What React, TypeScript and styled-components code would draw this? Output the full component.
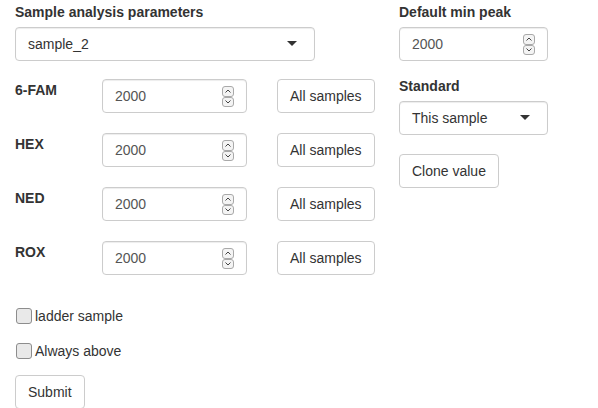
import React from "react";
import styled, { createGlobalStyle } from "styled-components";

const Global = createGlobalStyle`
  * { box-sizing: border-box; }
  body {
    margin: 0;
    font-family: "Liberation Sans", Arial, Helvetica, sans-serif;
    font-size: 14px;
    line-height: 20px;
    color: #333;
    background: #fff;
  }
`;

const Page = styled.div`
  display: flex;
  padding: 2px 15px 0 15px;
`;

const LeftCol = styled.div`
  width: 384px;
  flex: none;
`;

const RightCol = styled.div`
  flex: 1;
`;

const FormGroup = styled.div<{ $mb?: number }>`
  margin-bottom: ${(p) => (p.$mb ?? 15)}px;
`;

const Label = styled.label`
  display: block;
  font-weight: bold;
  margin-bottom: 5px;
  line-height: 20px;
`;

const SelectBox = styled.div<{ $w: number }>`
  position: relative;
  width: ${(p) => p.$w}px;
  height: 34px;
  padding: 6px 12px;
  border: 1px solid #ccc;
  border-radius: 4px;
  background: #fff;
  box-shadow: inset 0 1px 1px rgba(0, 0, 0, 0.075);
  line-height: 20px;
  &::after {
    content: "";
    position: absolute;
    right: 17px;
    top: 50%;
    margin-top: -3px;
    border-style: solid;
    border-width: 5px 5px 0 5px;
    border-color: #333 transparent transparent transparent;
  }
`;

const NumWrap = styled.div<{ $w: number }>`
  position: relative;
  width: ${(p) => p.$w}px;
  height: 34px;
`;

const NumInput = styled.input`
  display: block;
  width: 100%;
  height: 34px;
  padding: 6px 12px;
  border: 1px solid #ccc;
  border-radius: 4px;
  background: #fff;
  box-shadow: inset 0 1px 1px rgba(0, 0, 0, 0.075);
  font-family: inherit;
  font-size: 14px;
  color: #555;
  margin: 0;
  outline: none;
`;

const Spinner = styled.div`
  position: absolute;
  right: 13px;
  top: 7px;
  width: 12px;
  height: 21px;
  display: flex;
  flex-direction: column;
`;

const SpinBtn = styled.div`
  flex: 1;
  border: 1px solid #a9a9a9;
  border-radius: 3px;
  background: #f4f4f4;
  display: flex;
  align-items: center;
  justify-content: center;
`;

const Button = styled.button`
  display: inline-block;
  height: 34px;
  padding: 6px 12px;
  border: 1px solid #ccc;
  border-radius: 4px;
  background: #fff;
  font-family: inherit;
  font-size: 14px;
  line-height: 20px;
  color: #333;
  margin: 0;
`;

const ChannelRow = styled.div`
  display: grid;
  grid-template-columns: 87px 145px auto;
  align-items: start;
  margin-bottom: 20px;
`;

const RowLabel = styled.div`
  font-weight: bold;
  padding-top: 1px;
`;

const RowButton = styled(Button)`
  justify-self: start;
  margin-left: 30px;
`;

const Rows = styled.div`
  margin-top: 18px;
`;

const CheckRow = styled.label<{ $mb: number }>`
  display: flex;
  align-items: center;
  height: 20px;
  margin-bottom: ${(p) => p.$mb}px;
`;

const Check = styled.input`
  appearance: none;
  width: 16px;
  height: 16px;
  margin: 0 3px 0 1px;
  border: 1px solid #8d8d8d;
  border-radius: 3px;
  background: #e9e9e9;
  flex: none;
`;

const Checks = styled.div`
  margin-top: 31px;
`;

const CloneWrap = styled.div`
  margin-top: 19px;
`;

function Chevron({ up }: { up?: boolean }) {
  return (
    <svg width="6" height="4" viewBox="0 0 6 4">
      <path
        d={up ? "M0.5 3.5 L3 1 L5.5 3.5" : "M0.5 0.5 L3 3 L5.5 0.5"}
        fill="none"
        stroke="#444"
        strokeWidth="1"
      />
    </svg>
  );
}

function NumberField({ width, value }: { width: number; value: number }) {
  return (
    <NumWrap $w={width}>
      <NumInput type="text" inputMode="numeric" defaultValue={value} />
      <Spinner>
        <SpinBtn>
          <Chevron up />
        </SpinBtn>
        <SpinBtn>
          <Chevron />
        </SpinBtn>
      </Spinner>
    </NumWrap>
  );
}

const channels = ["6-FAM", "HEX", "NED", "ROX"];

export default function App() {
  return (
    <>
      <Global />
      <Page>
        <LeftCol>
          <FormGroup $mb={0}>
            <Label>Sample analysis parameters</Label>
            <SelectBox $w={300}>sample_2</SelectBox>
          </FormGroup>
          <Rows>
            {channels.map((c) => (
              <ChannelRow key={c}>
                <RowLabel>{c}</RowLabel>
                <NumberField width={145} value={2000} />
                <RowButton>All samples</RowButton>
              </ChannelRow>
            ))}
          </Rows>
          <Checks>
            <CheckRow $mb={15}>
              <Check type="checkbox" />
              ladder sample
            </CheckRow>
            <CheckRow $mb={14}>
              <Check type="checkbox" />
              Always above
            </CheckRow>
          </Checks>
          <Button>Submit</Button>
        </LeftCol>
        <RightCol>
          <FormGroup>
            <Label>Default min peak</Label>
            <NumberField width={149} value={2000} />
          </FormGroup>
          <FormGroup $mb={0}>
            <Label>Standard</Label>
            <SelectBox $w={149}>This sample</SelectBox>
          </FormGroup>
          <CloneWrap>
            <Button>Clone value</Button>
          </CloneWrap>
        </RightCol>
      </Page>
    </>
  );
}
